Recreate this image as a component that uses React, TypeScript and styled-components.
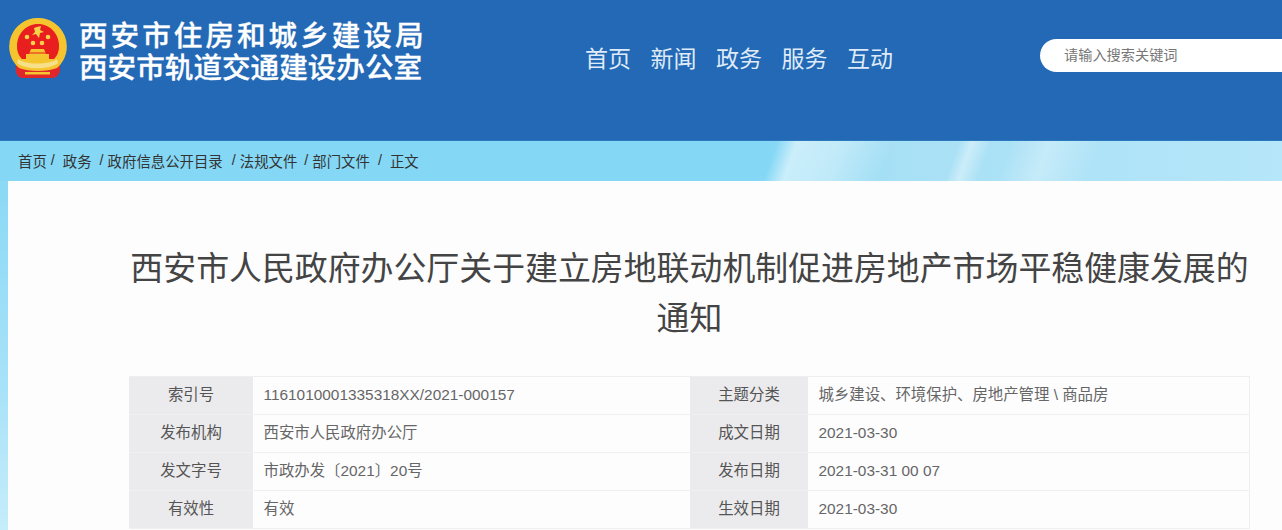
import React from "react";
import styled, { createGlobalStyle } from "styled-components";

const CJK = `"Liberation Sans", "Noto Sans CJK SC", sans-serif`;

const GlobalStyle = createGlobalStyle`
  html, body {
    margin: 0;
    padding: 0;
    overflow: hidden;
    background: #fdfdfe;
    font-family: ${CJK};
  }
`;

const Page = styled.div`
  width: 1282px;
  height: 530px;
  overflow: hidden;
`;

const Header = styled.header`
  height: 141px;
  box-sizing: border-box;
  display: flex;
  align-items: flex-start;
  background: #2369b5;
  border-bottom: 1px solid #2b78bd;
`;

const Brand = styled.div`
  display: flex;
  align-items: flex-start;
  gap: 12px;
  width: 585px;
  box-sizing: border-box;
  padding: 18px 0 0 9px;
`;

const BrandText = styled.div`
  display: flex;
  flex-direction: column;
  padding-top: 2px;
  color: #fff;
  font-weight: 500;
  font-size: 28.6px;
  line-height: 32px;
  -webkit-text-stroke: 0.3px #fff;
`;

const BrandLine = styled.div<{ $spacing?: number }>`
  white-space: nowrap;
  letter-spacing: ${(p) => p.$spacing ?? 0}px;
`;

const Nav = styled.nav`
  display: flex;
  gap: 19.5px;
  padding-top: 43px;
`;

const NavItem = styled.a`
  color: #dfebf8;
  font-size: 23px;
  line-height: 32px;
`;

const Search = styled.div`
  margin-left: auto;
  margin-top: 39px;
  width: 242px;
  height: 33px;
  box-sizing: border-box;
  padding: 0 0 3px 24px;
  display: flex;
  align-items: center;
  background: #fff;
  border-radius: 17px 0 0 17px;
  color: #777;
  font-size: 14.2px;
`;

const Crumbs = styled.div`
  height: 40px;
  box-sizing: border-box;
  display: flex;
  align-items: center;
  padding: 0 0 2px 18px;
  color: #333;
  font-size: 14.4px;
  background:
    linear-gradient(110deg, transparent 60%, rgba(255, 255, 255, 0.55) 61.5%, rgba(255, 255, 255, 0.4) 65%, transparent 69%),
    linear-gradient(110deg, transparent 74%, rgba(255, 255, 255, 0.4) 75%, transparent 76.5%, transparent 78%, rgba(255, 255, 255, 0.3) 81%, transparent 85%),
    linear-gradient(90deg, #85d8f5 0, #85d8f5 60%, #a8e0f5 70%, #b5e6f9 100%);
`;

const Crumb = styled.span<{ $gap: number }>`
  white-space: nowrap;
  margin-right: ${(p) => p.$gap}px;
`;

const Body = styled.div`
  height: 349px;
  background: linear-gradient(180deg, #8bd9f5 0, #a8e2f8 60%, #c6edfb 100%);
  padding-left: 8px;
`;

const Article = styled.main`
  height: 100%;
  box-sizing: border-box;
  background: #fdfdfe;
  padding: 63px 32px 0 121px;
`;

const Title = styled.h1`
  margin: 0 0 32px;
  text-align: center;
  color: #444;
  font-weight: 400;
  font-size: 32.9px;
  line-height: 50px;
`;

const MetaTable = styled.div`
  display: grid;
  grid-template-columns: 124px 437px 118px 442px;
  grid-auto-rows: 38px;
  border-top: 1px solid #eeeef0;
  border-right: 1px solid #eeeef0;
  font-size: 15.4px;
  line-height: 20px;
`;

const Label = styled.div`
  display: flex;
  align-items: center;
  justify-content: center;
  padding-bottom: 1px;
  box-sizing: border-box;
  background: #ebebed;
  color: #555;
  border-bottom: 1px solid #f0f0f2;
`;

const Value = styled.div`
  display: flex;
  align-items: center;
  padding: 0 0 1px 10.5px;
  box-sizing: border-box;
  color: #666;
  border-bottom: 1px solid #f0f0f2;
  white-space: nowrap;
`;

const Emblem = () => (
  <svg width="58" height="62" viewBox="0 0 58 62">
    <path d="M8 44 C5 52 7 60 14 60 H43 C50 60 53 52 50 44 Z" fill="#e0262a" />
    <path d="M29 0 A28.5 28.5 0 0 1 48 50 C38 54 20 54 10 50 A28.5 28.5 0 0 1 29 0 Z" fill="#f5c52f" />
    <path d="M29 6 C41 6 50 16 50 28 C50 34 48 38 45 41 H13 C10 38 8 34 8 28 C8 16 17 6 29 6 Z" fill="#e81e1f" />
    <path d="M28 9 l4 -1 -1 4 4 2 -4 1 -1 5 -3 -4 -4 1 3 -3 -1 -4 Z" fill="#f7d34a" />
    <circle cx="18" cy="19" r="2.3" fill="#f7d34a" />
    <circle cx="39" cy="19" r="2.3" fill="#f7d34a" />
    <circle cx="24" cy="25" r="2.3" fill="#f7d34a" />
    <circle cx="33" cy="25" r="2.3" fill="#f7d34a" />
    <path d="M22 31 H35 L37 36 H40 V42 H17 V36 H20 Z" fill="#f5c52f" />
    <path d="M17 34 H40 V36 H17 Z" fill="#e81e1f" opacity="0.5" />
    <path d="M9 41 C16 47 41 47 48 41 L49 45 C40 52 17 52 8 45 Z" fill="#f8e08a" />
    <path d="M16 54 H41 V56.5 H16 Z" fill="#f5c52f" />
  </svg>
);

const crumbs: [string, number][] = [
  ["首页", 4],
  ["/", 8],
  ["政务", 8],
  ["/", 4],
  ["政府信息公开目录", 9],
  ["/", 4],
  ["法规文件", 7],
  ["/", 4],
  ["部门文件", 8],
  ["/", 8],
  ["正文", 0],
];

const rows = [
  ["索引号", "1161010001335318XX/2021-000157", "主题分类", "城乡建设、环境保护、房地产管理 \\ 商品房"],
  ["发布机构", "西安市人民政府办公厅", "成文日期", "2021-03-30"],
  ["发文字号", "市政办发〔2021〕20号", "发布日期", "2021-03-31 00 07"],
  ["有效性", "有效", "生效日期", "2021-03-30"],
];

export default function App() {
  return (
    <Page>
      <GlobalStyle />
      <Header>
        <Brand>
          <Emblem />
          <BrandText>
            <BrandLine $spacing={3}>西安市住房和城乡建设局</BrandLine>
            <BrandLine>西安市轨道交通建设办公室</BrandLine>
          </BrandText>
        </Brand>
        <Nav>
          {["首页", "新闻", "政务", "服务", "互动"].map((n) => (
            <NavItem key={n}>{n}</NavItem>
          ))}
        </Nav>
        <Search>请输入搜索关键词</Search>
      </Header>
      <Crumbs>
        {crumbs.map(([text, gap], i) => (
          <Crumb key={i} $gap={gap}>
            {text}
          </Crumb>
        ))}
      </Crumbs>
      <Body>
        <Article>
          <Title>西安市人民政府办公厅关于建立房地联动机制促进房地产市场平稳健康发展的通知</Title>
          <MetaTable>
            {rows.map((r) => (
              <React.Fragment key={r[0]}>
                <Label>{r[0]}</Label>
                <Value>{r[1]}</Value>
                <Label>{r[2]}</Label>
                <Value>{r[3]}</Value>
              </React.Fragment>
            ))}
          </MetaTable>
        </Article>
      </Body>
    </Page>
  );
}
